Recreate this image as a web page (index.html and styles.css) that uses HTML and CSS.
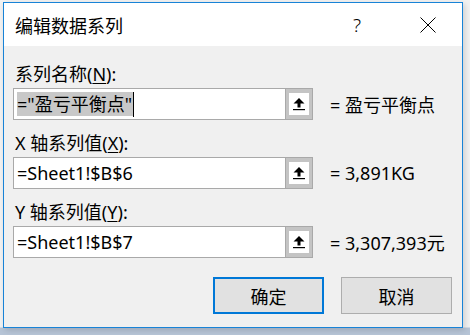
FILE: index.html
```html
<!DOCTYPE html>
<html lang="zh-CN">
<head>
  <meta charset="UTF-8">
  <title>编辑数据系列</title>
  <link rel="stylesheet" href="styles.css">
</head>
<body>
  <div class="dialog">
    <div class="titlebar">
      <span class="title">编辑数据系列</span>
      <span class="help">?</span>
      <span class="close">
        <svg viewBox="0 0 16 16" width="16" height="16">
          <path d="M0.5 0.5L15.5 15.5M15.5 0.5L0.5 15.5" stroke="#000" stroke-width="1" fill="none"/>
        </svg>
      </span>
    </div>

    <div class="content">
      <div class="field">
        <div class="label">系列名称(<u>N</u>):</div>
        <div class="row">
          <div class="ref-input">
            <div class="text"><span class="sel">="盈亏平衡点"</span><span class="caret"></span></div>
            <div class="collapse">
              <span class="collapse-face">
                <svg viewBox="0 0 12 13" width="12" height="13">
                  <path d="M6 0L11.5 5.5H7.5V9.5H4.5V5.5H0.5Z" fill="#000"/>
                  <rect x="0" y="11" width="12" height="1.2" fill="#000"/>
                </svg>
              </span>
            </div>
          </div>
          <span class="result">= 盈亏平衡点</span>
        </div>
      </div>

      <div class="field">
        <div class="label">X 轴系列值(<u>X</u>):</div>
        <div class="row">
          <div class="ref-input">
            <div class="text">=Sheet1!$B$6</div>
            <div class="collapse">
              <span class="collapse-face">
                <svg viewBox="0 0 12 13" width="12" height="13">
                  <path d="M6 0L11.5 5.5H7.5V9.5H4.5V5.5H0.5Z" fill="#000"/>
                  <rect x="0" y="11" width="12" height="1.2" fill="#000"/>
                </svg>
              </span>
            </div>
          </div>
          <span class="result">= 3,891KG</span>
        </div>
      </div>

      <div class="field">
        <div class="label">Y 轴系列值(<u>Y</u>):</div>
        <div class="row">
          <div class="ref-input">
            <div class="text">=Sheet1!$B$7</div>
            <div class="collapse">
              <span class="collapse-face">
                <svg viewBox="0 0 12 13" width="12" height="13">
                  <path d="M6 0L11.5 5.5H7.5V9.5H4.5V5.5H0.5Z" fill="#000"/>
                  <rect x="0" y="11" width="12" height="1.2" fill="#000"/>
                </svg>
              </span>
            </div>
          </div>
          <span class="result">= 3,307,393元</span>
        </div>
      </div>

      <div class="actions">
        <button class="btn btn-default">确定</button>
        <button class="btn">取消</button>
      </div>
    </div>
  </div>
</body>
</html>
```

FILE: styles.css
```css
html, body {
  margin: 0;
  padding: 0;
}
body {
  width: 470px;
  height: 335px;
  overflow: hidden;
  padding: 2px 0 0 3px;
  box-sizing: border-box;
  font-family: "Noto Sans", "Noto Sans CJK SC", sans-serif;
  color: #000;
  background: linear-gradient(180deg, #f2f2f2 0%, #f2f2f2 327px, #b6c4d6 328px, #b6c4d6 100%);
}
.dialog {
  width: 460px;
  height: 326px;
  box-sizing: border-box;
  border: 1px solid #1883d7;
  background: #f0f0f0;
  box-shadow: 2px 2px 6px rgba(0, 0, 0, 0.15);
}
.titlebar {
  height: 43px;
  background: #fff;
  display: flex;
  align-items: center;
  padding-left: 11px;
}
.title {
  font-size: 18px;
  flex: 1;
}
.help {
  font-size: 19px;
  font-weight: 300;
  width: 20px;
  text-align: center;
  margin-right: 53px;
}
.close {
  display: flex;
  width: 16px;
  height: 16px;
  margin-right: 26px;
}
.content {
  padding: 16px 10px 0 9px;
}
.field {
  margin-bottom: 11px;
}
.label {
  font-size: 18px;
  line-height: 24px;
  height: 24px;
  margin-bottom: 2px;
  padding-left: 2px;
}
.label u {
  text-underline-offset: 2px;
}
.row {
  display: flex;
  align-items: center;
}
.ref-input {
  width: 300px;
  height: 32px;
  box-sizing: border-box;
  border: 1px solid #a9a9a9;
  background: #fff;
  display: flex;
}
.text {
  flex: 1;
  display: flex;
  align-items: center;
  padding-left: 3px;
  font-size: 18px;
  line-height: 24px;
  white-space: nowrap;
}
.sel {
  background: #c8c8c8;
  padding-right: 1px;
}
.caret {
  display: inline-block;
  width: 1px;
  height: 25px;
  background: #000;
}
.collapse {
  width: 27px;
  box-sizing: border-box;
  border-left: 1px solid #a9a9a9;
  background: #c4c4c4;
  padding: 4px 3px;
  display: flex;
}
.collapse-face {
  flex: 1;
  background: #fff;
  display: flex;
  align-items: center;
  justify-content: center;
}
.result {
  margin-left: 17px;
  font-size: 18px;
  white-space: nowrap;
}
.actions {
  display: flex;
  justify-content: flex-end;
  gap: 17px;
  margin-top: 19px;
}
.btn {
  width: 111px;
  height: 37px;
  box-sizing: border-box;
  border: 1px solid #adadad;
  background: #e1e1e1;
  font-family: "Noto Sans", "Noto Sans CJK SC", sans-serif;
  font-size: 18px;
  color: #000;
  padding: 0;
}
.btn-default {
  border: 2px solid #0078d7;
}
```
